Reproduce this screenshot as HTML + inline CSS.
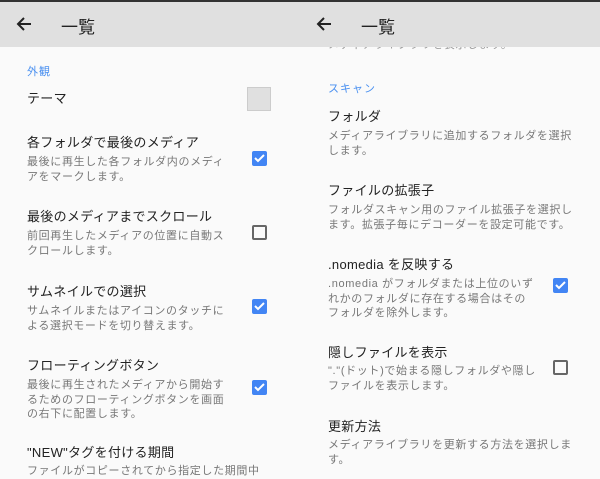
<!DOCTYPE html><html><head><meta charset="utf-8"><style>
body{margin:0;width:600px;height:477px;background:#fafafa;position:relative;overflow:hidden;font-family:"Liberation Sans","Noto Sans CJK JP",sans-serif;}
.bar{position:absolute;top:0;height:47px;width:300px;background:#e0e0e0;}
.bar:before{content:"";position:absolute;top:0;left:0;right:0;height:2px;background:#333;}
.ttl{position:absolute;top:13px;left:61px;font-size:17px;color:#222;}
.arr{position:absolute;left:16px;top:16px;}
.t{position:absolute;font-size:13px;color:#222;white-space:nowrap;letter-spacing:.3px;line-height:16px;}
.s{position:absolute;font-size:11px;color:#777;white-space:nowrap;letter-spacing:.65px;line-height:14.5px;}
.h{position:absolute;font-size:11px;color:#4a90f0;letter-spacing:1px;}
.cb{position:absolute;width:15px;height:15px;border-radius:2px;box-sizing:border-box;}
.on{background:#4285f4;}
.off{border:2px solid #666;}
</style></head><body>
<div class="bar" style="left:0"><svg class="arr" width="16" height="16" viewBox="0 0 16 16"><path d="M15 8H2M8 2L2 8l6 6" stroke="#222" stroke-width="2" fill="none"/></svg><div class="ttl">一覧</div></div>

<div class="h" style="left:27px;top:63px">外観</div>
<div class="t" style="left:27px;top:91px">テーマ</div>
<div style="position:absolute;left:247px;top:87px;width:24px;height:24px;background:#e0e0e0;border:1px solid #ccc;box-sizing:border-box"></div>

<div class="t" style="left:27px;top:135px">各フォルダで最後のメディア</div>
<div class="s" style="left:27px;top:155px">最後に再生した各フォルダ内のメディ<br>アをマークします。</div>
<div class="cb on" style="left:252px;top:151px"></div>

<div class="t" style="left:27px;top:209px">最後のメディアまでスクロール</div>
<div class="s" style="left:27px;top:229px">前回再生したメディアの位置に自動ス<br>クロールします。</div>
<div class="cb off" style="left:252px;top:225px"></div>

<div class="t" style="left:27px;top:284px">サムネイルでの選択</div>
<div class="s" style="left:27px;top:304px">サムネイルまたはアイコンのタッチに<br>よる選択モードを切り替えます。</div>
<div class="cb on" style="left:252px;top:299px"></div>

<div class="t" style="left:27px;top:358px">フローティングボタン</div>
<div class="s" style="left:27px;top:378px">最後に再生されたメディアから開始す<br>るためのフローティングボタンを画面<br>の右下に配置します。</div>
<div class="cb on" style="left:252px;top:380px"></div>

<div class="t" style="left:27px;top:445px">"NEW"タグを付ける期間</div>
<div class="s" style="left:27px;top:464px">ファイルがコピーされてから指定した期間中</div>

<div class="s" style="left:328px;top:38px;color:#999">メディアライブラリを表示します。</div>
<div class="bar" style="left:300px"><svg class="arr" width="16" height="16" viewBox="0 0 16 16"><path d="M15 8H2M8 2L2 8l6 6" stroke="#222" stroke-width="2" fill="none"/></svg><div class="ttl">一覧</div></div>

<div class="h" style="left:328px;top:80px">スキャン</div>
<div class="t" style="left:328px;top:109px">フォルダ</div>
<div class="s" style="left:328px;top:129px">メディアライブラリに追加するフォルダを選択<br>します。</div>

<div class="t" style="left:328px;top:183px">ファイルの拡張子</div>
<div class="s" style="left:328px;top:203px">フォルダスキャン用のファイル拡張子を選択し<br>ます。拡張子毎にデコーダーを設定可能です。</div>

<div class="t" style="left:328px;top:257px">.nomedia を反映する</div>
<div class="s" style="left:328px;top:277px">.nomedia がフォルダまたは上位のいず<br>れかのフォルダに存在する場合はその<br>フォルダを除外します。</div>
<div class="cb on" style="left:553px;top:278px"></div>

<div class="t" style="left:328px;top:345px">隠しファイルを表示</div>
<div class="s" style="left:328px;top:364px">"."(ドット)で始まる隠しフォルダや隠し<br>ファイルを表示します。</div>
<div class="cb off" style="left:553px;top:360px"></div>

<div class="t" style="left:328px;top:419px">更新方法</div>
<div class="s" style="left:328px;top:438px">メディアライブラリを更新する方法を選択しま<br>す。</div>

<svg style="position:absolute;left:0;top:0" width="600" height="477"><g stroke="#fff" stroke-width="2" fill="none"><path d="M255 158l3 3 6-6"/><path d="M255 306l3 3 6-6"/><path d="M255 387l3 3 6-6"/><path d="M556 285l3 3 6-6"/></g></svg>
</body></html>
